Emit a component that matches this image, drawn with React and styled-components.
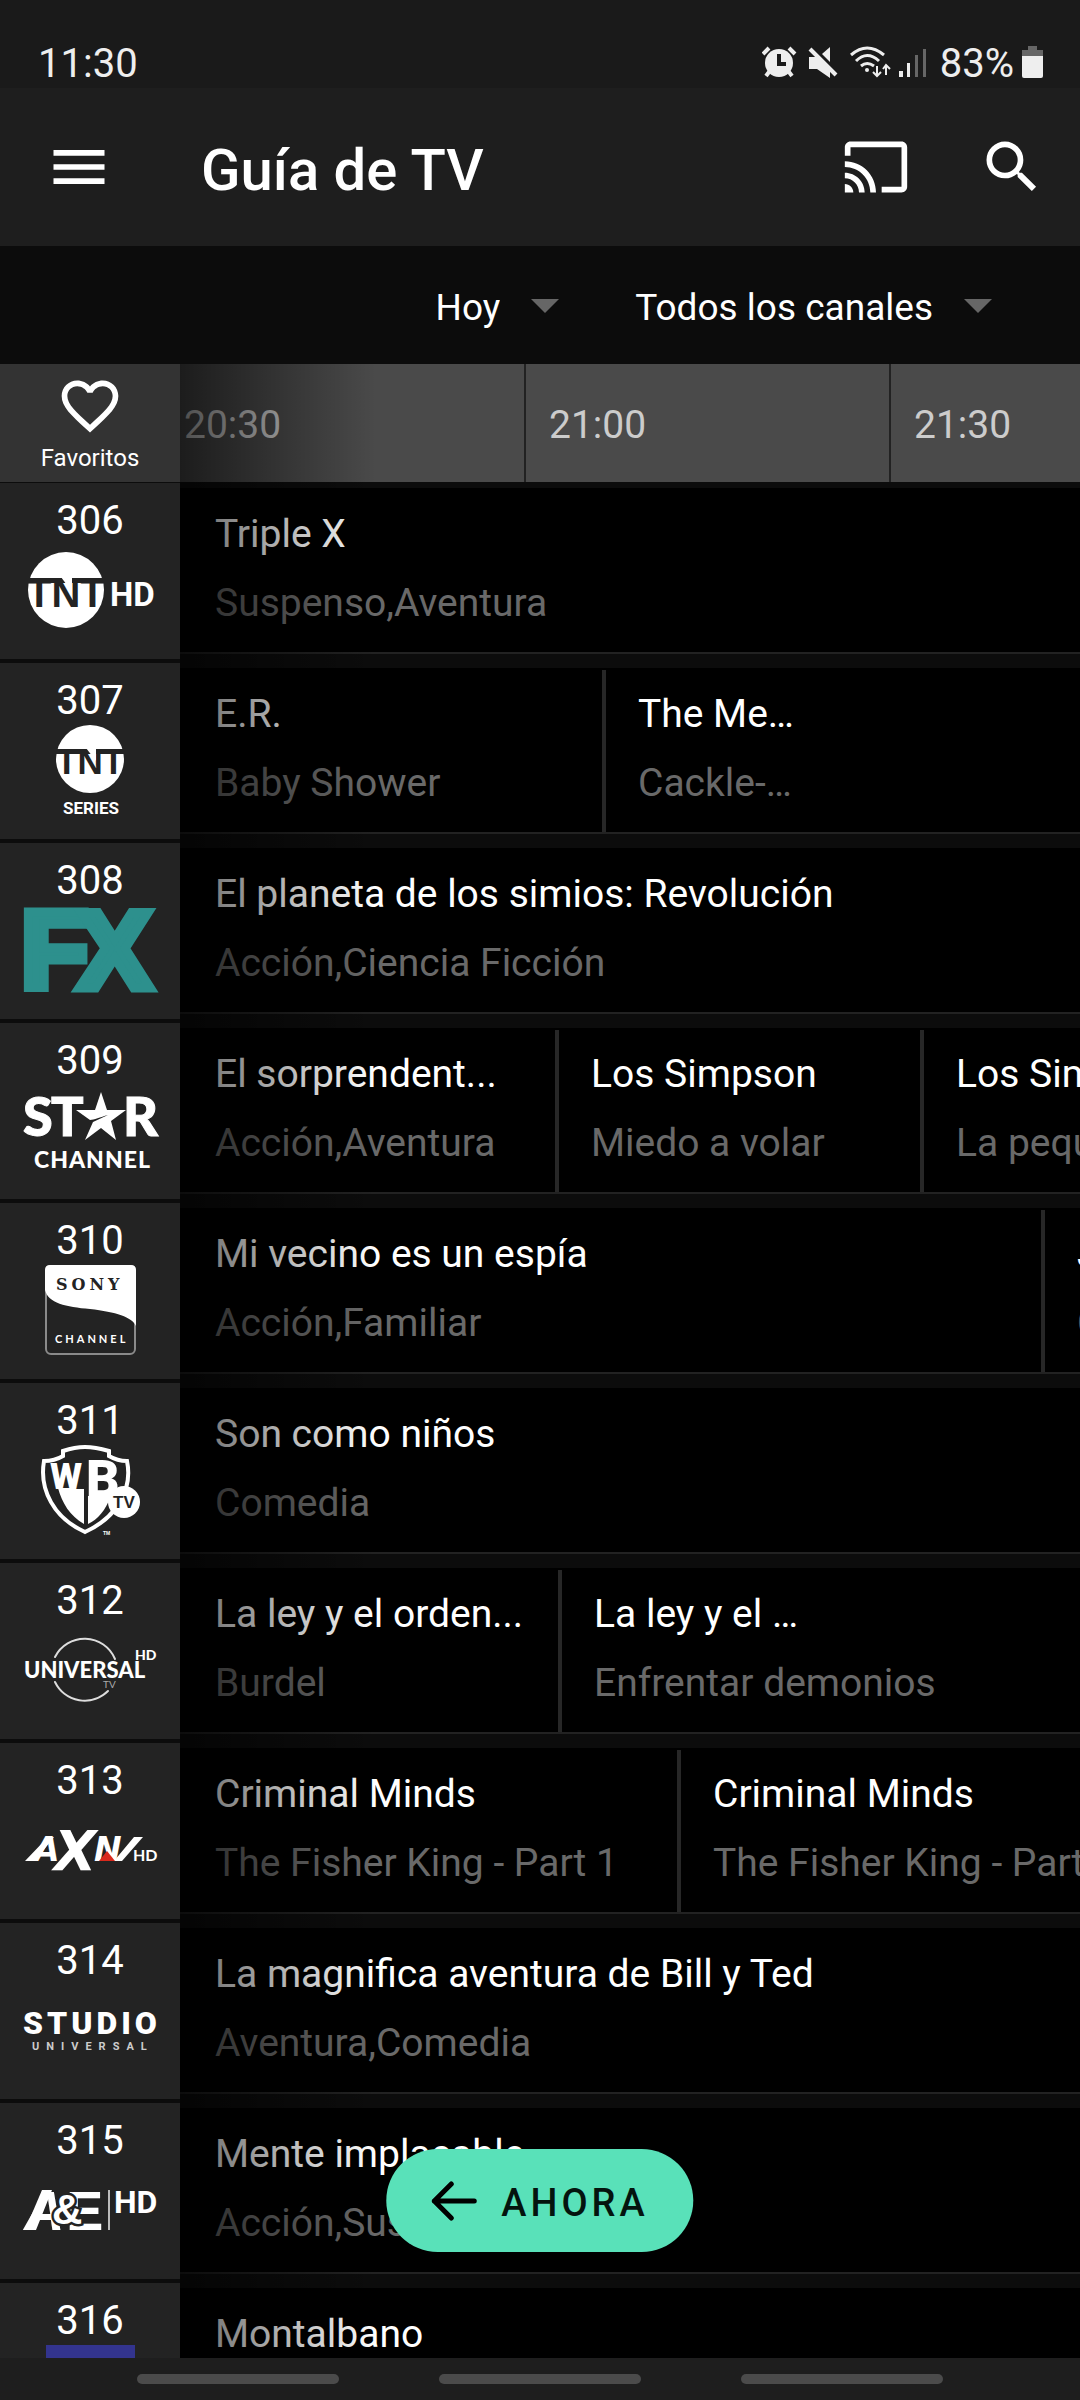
import React from "react";
import styled, { createGlobalStyle, css } from "styled-components";

const GlobalStyle = createGlobalStyle`
  *, *::before, *::after { box-sizing: border-box; }
  body {
    margin: 0;
    background: #0c0c0c;
    color: #fff;
    font-family: Roboto, "Noto Sans", sans-serif;
  }
  button, select { font: inherit; color: inherit; }
`;

const CHANNEL_WIDTH = 180;

const Screen = styled.div`
  display: flex;
  flex-direction: column;
  height: 100vh;
  overflow: hidden;
`;

const StatusBar = styled.div`
  display: flex;
  justify-content: space-between;
  height: 88px;
  padding: 40px 37px 0 38px;
  background: #1a1a1a;
  color: #eee;
  font-size: 40px;
  line-height: 48px;
`;

const StatusGroup = styled.div`
  display: flex;
  align-items: center;
  gap: 8px;
  height: 48px;
`;

const AppBar = styled.header`
  display: flex;
  align-items: center;
  height: 158px;
  padding: 0 34px 0 45px;
  background: #1e1e1e;
`;

const Title = styled.h1`
  flex: 1;
  margin: 0;
  padding: 6px 0 0 88px;
  font-size: 58px;
  font-weight: 500;
  line-height: 64px;
`;

const IconButton = styled.button`
  display: flex;
  padding: 0;
  border: 0;
  background: none;

  & + & { margin-left: 68px; }
`;

const MaterialIcon = styled.svg`
  display: block;
  width: 68px;
  height: 68px;
  fill: currentColor;
`;

const FilterBar = styled.div`
  display: flex;
  align-items: center;
  justify-content: flex-end;
  gap: 76px;
  height: 118px;
  padding: 2px 88px 0 0;
  background: #0c0c0c;
`;

const SelectBox = styled.label`
  display: grid;
  align-items: center;
`;

const Select = styled.select`
  grid-area: 1 / 1;
  appearance: none;
  field-sizing: content;
  height: 60px;
  padding: 2px 59px 0 0;
  border: 0;
  background: none;
  font-size: 37px;
`;

const Caret = styled.svg`
  grid-area: 1 / 1;
  justify-self: end;
  width: 28px;
  height: 14px;
  fill: #666;
  pointer-events: none;
`;

const Guide = styled.main`
  position: relative;
  flex: 1;
  min-height: 0;
  overflow: hidden;
`;

const TimeHeader = styled.div`
  display: flex;
  height: 119px;
  border-bottom: 1px solid #0c0c0c;
`;

const Favorites = styled.button`
  display: flex;
  flex: none;
  flex-direction: column;
  align-items: center;
  gap: 4px;
  width: ${CHANNEL_WIDTH}px;
  padding: 8px 0 0;
  border: 0;
  background: #333;
  font-size: 24px;
  line-height: 28px;
`;

const TimeTrack = styled.div`
  flex: 1;
  min-width: 0;
  overflow: hidden;
  background: #4a4a4a;
`;

const TimeSlots = styled.div`
  display: flex;
  height: 100%;
  margin-left: -19px;
`;

const TimeSlot = styled.time`
  display: flex;
  flex: none;
  align-items: center;
  width: 365px;
  padding: 4px 0 0 23px;
  border-right: 2px solid #222;
  color: #ccc;
  font-size: 39px;
  line-height: 48px;
`;

const ChannelRow = styled.section`
  display: flex;
  height: 180px;
`;

const Channel = styled.div`
  display: flex;
  flex: none;
  flex-direction: column;
  align-items: center;
  width: ${CHANNEL_WIDTH}px;
  height: 176px;
  padding-top: 14px;
  background: #232323;
  font-size: 40px;
  line-height: 48px;
`;

const Logo = styled.svg`
  flex: none;
  width: 132px;
  height: 90px;
  overflow: visible;
  fill: #fff;
`;

const Programs = styled.div`
  display: flex;
  flex: 1;
  min-width: 0;
  height: 166px;
  margin-top: 5px;
  padding-top: 2px;
  overflow: hidden;
  border-bottom: 2px solid #222;
  background: #000;
`;

const Program = styled.article`
  flex: none;
  ${({ $width }) => ($width ? css`width: ${$width}px;` : css`flex: 1 0 auto;`)}
  padding: 20px 0 0 32px;
  border-left: 4px solid #272727;
  white-space: nowrap;
  font-size: 39px;
  line-height: 48px;

  &:first-child {
    padding-left: 31px;
    border-color: transparent;
  }
`;

const ProgramTitle = styled.h2`
  margin: 0 0 21px;
  font: inherit;
`;

const ProgramInfo = styled.p`
  margin: 0;
  color: #696969;
`;

const EdgeFade = styled.div`
  position: absolute;
  top: 0;
  bottom: 0;
  left: ${CHANNEL_WIDTH}px;
  width: 196px;
  background: linear-gradient(to right, rgba(0, 0, 0, 0.62), rgba(0, 0, 0, 0));
  pointer-events: none;
`;

const NowButton = styled.button`
  position: absolute;
  bottom: 106px;
  left: 50%;
  display: flex;
  align-items: center;
  gap: 24px;
  height: 103px;
  padding: 0 45px;
  border: 0;
  border-radius: 52px;
  background: #59e1b9;
  color: #04140e;
  font-size: 38px;
  font-weight: 500;
  letter-spacing: 4px;
  transform: translateX(-50%);
`;

const NowLabel = styled.span`
  padding-top: 4px;
  line-height: 44px;
`;

const NavBar = styled.nav`
  display: flex;
  justify-content: center;
  gap: 100px;
  height: 42px;
  padding-top: 16px;
  background: #1e1e1e;
`;

const NavPill = styled.button`
  width: 202px;
  height: 10px;
  padding: 0;
  border: 0;
  border-radius: 5px;
  background: #4b4b4b;
`;

const SANS = '"Liberation Sans", sans-serif';
const LATO = "Lato, sans-serif";
const ROBOTO = "Roboto, sans-serif";
const DEJAVU = '"DejaVu Sans", sans-serif';

const Word = styled.text`
  font-family: ${({ $font }) => $font};
  font-size: ${({ $size }) => $size}px;
  font-weight: ${({ $weight }) => $weight || 700};
  font-style: ${({ $italic }) => ($italic ? "italic" : "normal")};
  letter-spacing: ${({ $track }) => $track || 0}px;
`;

const DARK = "#232323";

const TntHd = () => (
  <Logo viewBox="0 0 132 90" role="img" aria-label="TNT HD">
    <circle cx="42" cy="45" r="38" />
    <path d="M2 33H82V38H2Z" fill={DARK} />
    <Word $font={SANS} $size={40} x="3" y="62" fill={DARK}>TNT</Word>
    <path d="M37 32H48V47Z" />
    <Word $font={ROBOTO} $size={33} x="86" y="61">HD</Word>
  </Logo>
);

const TntSeries = () => (
  <Logo viewBox="0 0 132 90" role="img" aria-label="TNT Series">
    <circle cx="66" cy="34" r="34" />
    <path d="M30 24H102V29H30Z" fill={DARK} />
    <Word $font={SANS} $size={35} x="32" y="49" fill={DARK}>TNT</Word>
    <path d="M62 23H72V36Z" />
    <Word $font={ROBOTO} $size={17} x="39" y="89">SERIES</Word>
  </Logo>
);

const Fx = () => (
  <Logo viewBox="0 0 132 90" role="img" aria-label="FX">
    <g fill="#2d908d" stroke="#2d908d" strokeWidth="9">
      <Word $font={SANS} $size={110} x="-3" y="83">F</Word>
      <Word $font={SANS} $size={110} x="54" y="83">X</Word>
    </g>
  </Logo>
);

const Star = () => (
  <Logo viewBox="0 0 132 90" role="img" aria-label="Star Channel">
    <g stroke="#fff">
      <Word $font={LATO} $weight={900} $size={54} x="-1" y="51">S</Word>
      <Word $font={LATO} $weight={900} $size={54} x="27" y="51">T</Word>
      <Word $font={LATO} $weight={900} $size={54} x="99" y="51">R</Word>
    </g>
    <path d="M77 7L83 25H102L87 36L92 55L77 43L61 55L69 37L84 30C76 32 70 35 66 35L52 25H71Z" />
    <Word $font={LATO} $weight={900} $size={23} $track={1} x="10" y="83">CHANNEL</Word>
  </Logo>
);

const Sony = () => (
  <Logo viewBox="0 0 132 90" role="img" aria-label="Sony Channel">
    <rect x="22" y="1" width="89" height="88" rx="5" fill="none" stroke="#8a8a8a" strokeWidth="2" />
    <path d="M21 5Q21 0 26 0H107Q112 0 112 5V61C108 52 92 47 66 44C42 42 24 38 21 25Z" />
    <Word $font={'"DejaVu Serif", serif'} $size={16} $track={4} x="32" y="25" fill={DARK}>SONY</Word>
    <Word $font={LATO} $size={11} $track={3} x="31" y="78">CHANNEL</Word>
  </Logo>
);

const Warner = () => (
  <Logo viewBox="0 0 132 90" role="img" aria-label="Warner TV">
    <path
      d="M61 2C53 2 45 4 39 6V11C34 14 26 16 20 16C15 45 30 73 61 87C92 73 109 45 103 16C97 16 90 14 85 11V6C78 4 70 2 61 2Z"
      fill="none"
      stroke="#fff"
      strokeWidth="4"
    />
    <Word $font={ROBOTO} $weight={900} $size={37} x="26" y="44">W</Word>
    <Word $font={ROBOTO} $weight={900} $size={52} x="62" y="52">B</Word>
    <path d="M34 43H48L52 44H60V79C46 71 38 58 34 43Z" />
    <path d="M64 51H87C81 66 74 74 64 79Z" />
    <circle cx="100" cy="57" r="16" />
    <Word $font={SANS} $size={17} x="89" y="63" fill={DARK}>TV</Word>
    <Word $font={SANS} $size={5} x="79" y="90">TM</Word>
  </Logo>
);

const UniversalHd = () => (
  <Logo viewBox="0 0 132 90" role="img" aria-label="Universal TV HD">
    <g fill="none" stroke="#ddd" strokeWidth="2" strokeLinecap="round">
      <path d="M31 32A33 33 0 0 1 91 34" />
      <path d="M31 57A33 33 0 0 0 84 66" />
    </g>
    <Word $font={LATO} $weight={900} $size={22} x="0" y="53">UNIVERSAL</Word>
    <Word $font={LATO} $weight={900} $size={14} x="111" y="35">HD</Word>
    <Word $font={LATO} $weight={400} $size={10} x="79" y="63" fill="#aaa">TV</Word>
  </Logo>
);

const Axn = () => (
  <Logo viewBox="0 0 132 90" role="img" aria-label="AXN HD">
    <Word $font={DEJAVU} $italic $size={33} x="10" y="56">A</Word>
    <Word $font={DEJAVU} $italic $size={55} x="30" y="65">X</Word>
    <Word $font={DEJAVU} $italic $size={33} x="70" y="56">N</Word>
    <path d="M1 56L23 33L30 32L11 56ZM90 56L110 32H119L98 56Z" />
    <path d="M75 56L83 46L91 56Z" fill="#d9291c" />
    <Word $font={LATO} $size={16} x="109" y="56">HD</Word>
  </Logo>
);

const Studio = () => (
  <Logo viewBox="0 0 132 90" role="img" aria-label="Studio Universal">
    <Word $font={ROBOTO} $weight={900} $size={32} $track={4} x="-1" y="49">STUDIO</Word>
    <Word $font={ROBOTO} $size={11} $track={7} x="8" y="65" fill="#ccc">UNIVERSAL</Word>
  </Logo>
);

const AeHd = () => (
  <Logo viewBox="0 0 132 90" role="img" aria-label="A&E HD">
    <Word $font={SANS} $italic $size={56} x="0" y="65">A</Word>
    <Word $font={SANS} $size={56} x="42" y="65">E</Word>
    <Word $font={SANS} $size={42} x="28" y="59" stroke={DARK} strokeWidth="5" paintOrder="stroke">&amp;</Word>
    <path d="M1 65L18 25H28L12 65Z" />
    <path d="M84 25H86V65H84Z" fill="#bbb" />
    <Word $font={ROBOTO} $size={32} x="90" y="48">HD</Word>
  </Logo>
);

const BlueLogo = () => (
  <Logo viewBox="0 0 132 90" role="img" aria-label="Canal 316">
    <path d="M22 0H111V90H22Z" fill="#33348e" />
  </Logo>
);

const channels = [
  { number: 306, Mark: TntHd, programs: [{ title: "Triple X", info: "Suspenso,Aventura" }] },
  {
    number: 307,
    Mark: TntSeries,
    programs: [
      { title: "E.R.", info: "Baby Shower", width: 422 },
      { title: "The Me…", info: "Cackle-…" },
    ],
  },
  {
    number: 308,
    Mark: Fx,
    programs: [{ title: "El planeta de los simios: Revolución", info: "Acción,Ciencia Ficción" }],
  },
  {
    number: 309,
    Mark: Star,
    programs: [
      { title: "El sorprendent...", info: "Acción,Aventura", width: 375 },
      { title: "Los Simpson", info: "Miedo a volar", width: 365 },
      { title: "Los Simpson", info: "La pequeña" },
    ],
  },
  {
    number: 310,
    Mark: Sony,
    programs: [
      { title: "Mi vecino es un espía", info: "Acción,Familiar", width: 861 },
      { title: "Jumanji", info: "Comedia" },
    ],
  },
  { number: 311, Mark: Warner, programs: [{ title: "Son como niños", info: "Comedia" }] },
  {
    number: 312,
    Mark: UniversalHd,
    programs: [
      { title: "La ley y el orden...", info: "Burdel", width: 378 },
      { title: "La ley y el …", info: "Enfrentar demonios" },
    ],
  },
  {
    number: 313,
    Mark: Axn,
    programs: [
      { title: "Criminal Minds", info: "The Fisher King - Part 1", width: 497 },
      { title: "Criminal Minds", info: "The Fisher King - Part 2" },
    ],
  },
  {
    number: 314,
    Mark: Studio,
    programs: [{ title: "La magnifica aventura de Bill y Ted", info: "Aventura,Comedia" }],
  },
  { number: 315, Mark: AeHd, programs: [{ title: "Mente implacable", info: "Acción,Suspenso" }] },
  { number: 316, Mark: BlueLogo, programs: [{ title: "Montalbano", info: "Drama" }] },
];

const AlarmIcon = () => (
  <svg width="38" height="36" viewBox="0 0 38 36" fill="#eee" aria-hidden="true">
    <circle cx="17" cy="17" r="14" />
    <path d="M7 26L4 30M27 26L30 30M1 8L7 2M33 8L27 2" stroke="#eee" strokeWidth="4" />
    <path d="M17 8V18H24" fill="none" stroke="#1a1a1a" strokeWidth="4" />
  </svg>
);

const MuteIcon = () => (
  <svg width="34" height="36" viewBox="0 0 34 36" fill="#eee" aria-hidden="true">
    <path d="M1 11H8L22 25V32L9 23H1Z" />
    <path d="M14 8L22 1V16Z" />
    <path d="M2 3L28 29" stroke="#eee" strokeWidth="4" />
  </svg>
);

const WifiIcon = () => (
  <svg width="41" height="36" viewBox="0 0 41 36" fill="none" stroke="#eee" strokeWidth="3" aria-hidden="true">
    <path d="M1 9Q17 -5 34 9M6 15Q17 4 29 15M11 20Q17 15 24 20" />
    <circle cx="17" cy="24" r="2" fill="#eee" stroke="none" />
    <path d="M27 20V30M23 26L27 30L31 26M36 29V19M33 23L36 19L40 23" strokeWidth="2" />
  </svg>
);

const SignalIcon = () => (
  <svg width="33" height="36" viewBox="0 0 33 36" aria-hidden="true">
    <path d="M0 25H4V31H0ZM8 17H11V31H8Z" fill="#eee" />
    <path d="M16 9H19V31H16ZM24 3H27V31H24Z" fill="#666" />
  </svg>
);

const BatteryIcon = () => (
  <svg width="21" height="36" viewBox="0 0 21 36" aria-hidden="true">
    <path d="M6 0H15V4H21V10H0V4H6Z" fill="#666" />
    <path d="M0 10H21V30Q21 32 19 32H2Q0 32 0 30Z" fill="#eee" />
  </svg>
);

const icons = {
  menu: "M3 18h18v-2H3v2zm0-5h18v-2H3v2zm0-7v2h18V6H3z",
  cast: "M21 3H3c-1.1 0-2 .9-2 2v3h2V5h18v14h-7v2h7c1.1 0 2-.9 2-2V5c0-1.1-.9-2-2-2zM1 18v3h3c0-1.66-1.34-3-3-3zm0-4v2c2.76 0 5 2.24 5 5h2c0-3.87-3.13-7-7-7zm0-4v2c4.97 0 9 4.03 9 9h2c0-6.08-4.93-11-11-11z",
  search:
    "M15.5 14h-.79l-.28-.27A6.471 6.471 0 0 0 16 9.5 6.5 6.5 0 1 0 9.5 16c1.61 0 3.09-.59 4.23-1.57l.27.28v.79l5 4.99L20.49 19l-4.99-5zm-6 0C7.01 14 5 11.99 5 9.5S7.01 5 9.5 5 14 7.01 14 9.5 11.99 14 9.5 14z",
  heart:
    "M16.5 3c-1.74 0-3.41.81-4.5 2.09C10.91 3.81 9.24 3 7.5 3 4.42 3 2 5.42 2 8.5c0 3.78 3.4 6.86 8.55 11.54L12 21.35l1.45-1.32C18.6 15.36 22 12.28 22 8.5 22 5.42 19.58 3 16.5 3zm-4.4 15.55l-.1.1-.1-.1C7.14 14.24 4 11.39 4 8.5 4 6.5 5.5 5 7.5 5c1.54 0 3.04.99 3.57 2.36h1.87C13.46 5.99 14.96 5 16.5 5c2 0 3.5 1.5 3.5 3.5 0 2.89-3.14 5.74-7.9 10.05z",
};

const Icon = ({ name }) => (
  <MaterialIcon viewBox="0 0 24 24" aria-hidden="true">
    <path d={icons[name]} />
  </MaterialIcon>
);

const Filter = ({ label, options }) => (
  <SelectBox>
    <Select aria-label={label}>
      {options.map((option) => (
        <option key={option}>{option}</option>
      ))}
    </Select>
    <Caret viewBox="0 0 28 14" aria-hidden="true">
      <path d="M0 0H28L14 14Z" />
    </Caret>
  </SelectBox>
);

export default function App() {
  return (
    <Screen>
      <GlobalStyle />
      <StatusBar>
        <time>11:30</time>
        <StatusGroup>
          <AlarmIcon />
          <MuteIcon />
          <WifiIcon />
          <SignalIcon />
          <span>83%</span>
          <BatteryIcon />
        </StatusGroup>
      </StatusBar>

      <AppBar>
        <IconButton aria-label="Menú"><Icon name="menu" /></IconButton>
        <Title>Guía de TV</Title>
        <IconButton aria-label="Transmitir"><Icon name="cast" /></IconButton>
        <IconButton aria-label="Buscar"><Icon name="search" /></IconButton>
      </AppBar>

      <FilterBar>
        <Filter label="Día" options={["Hoy"]} />
        <Filter label="Canales" options={["Todos los canales"]} />
      </FilterBar>

      <Guide>
        <TimeHeader>
          <Favorites>
            <Icon name="heart" />
            Favoritos
          </Favorites>
          <TimeTrack>
            <TimeSlots>
              {["20:30", "21:00", "21:30"].map((time) => (
                <TimeSlot key={time}>{time}</TimeSlot>
              ))}
            </TimeSlots>
          </TimeTrack>
        </TimeHeader>

        {channels.map(({ number, Mark, programs }) => (
          <ChannelRow key={number}>
            <Channel>
              <span>{number}</span>
              <Mark />
            </Channel>
            <Programs>
              {programs.map(({ title, info, width }, index) => (
                <Program key={index} $width={width}>
                  <ProgramTitle>{title}</ProgramTitle>
                  <ProgramInfo>{info}</ProgramInfo>
                </Program>
              ))}
            </Programs>
          </ChannelRow>
        ))}

        <EdgeFade />
        <NowButton>
          <svg width="46" height="40" viewBox="0 0 46 40" fill="none" stroke="#000" strokeWidth="5" strokeLinecap="round" strokeLinejoin="round" aria-hidden="true">
            <path d="M43 20H3M20 3L3 20L20 37" />
          </svg>
          <NowLabel>AHORA</NowLabel>
        </NowButton>
      </Guide>

      <NavBar aria-label="Sistema">
        <NavPill aria-label="Recientes" />
        <NavPill aria-label="Inicio" />
        <NavPill aria-label="Atrás" />
      </NavBar>
    </Screen>
  );
}
